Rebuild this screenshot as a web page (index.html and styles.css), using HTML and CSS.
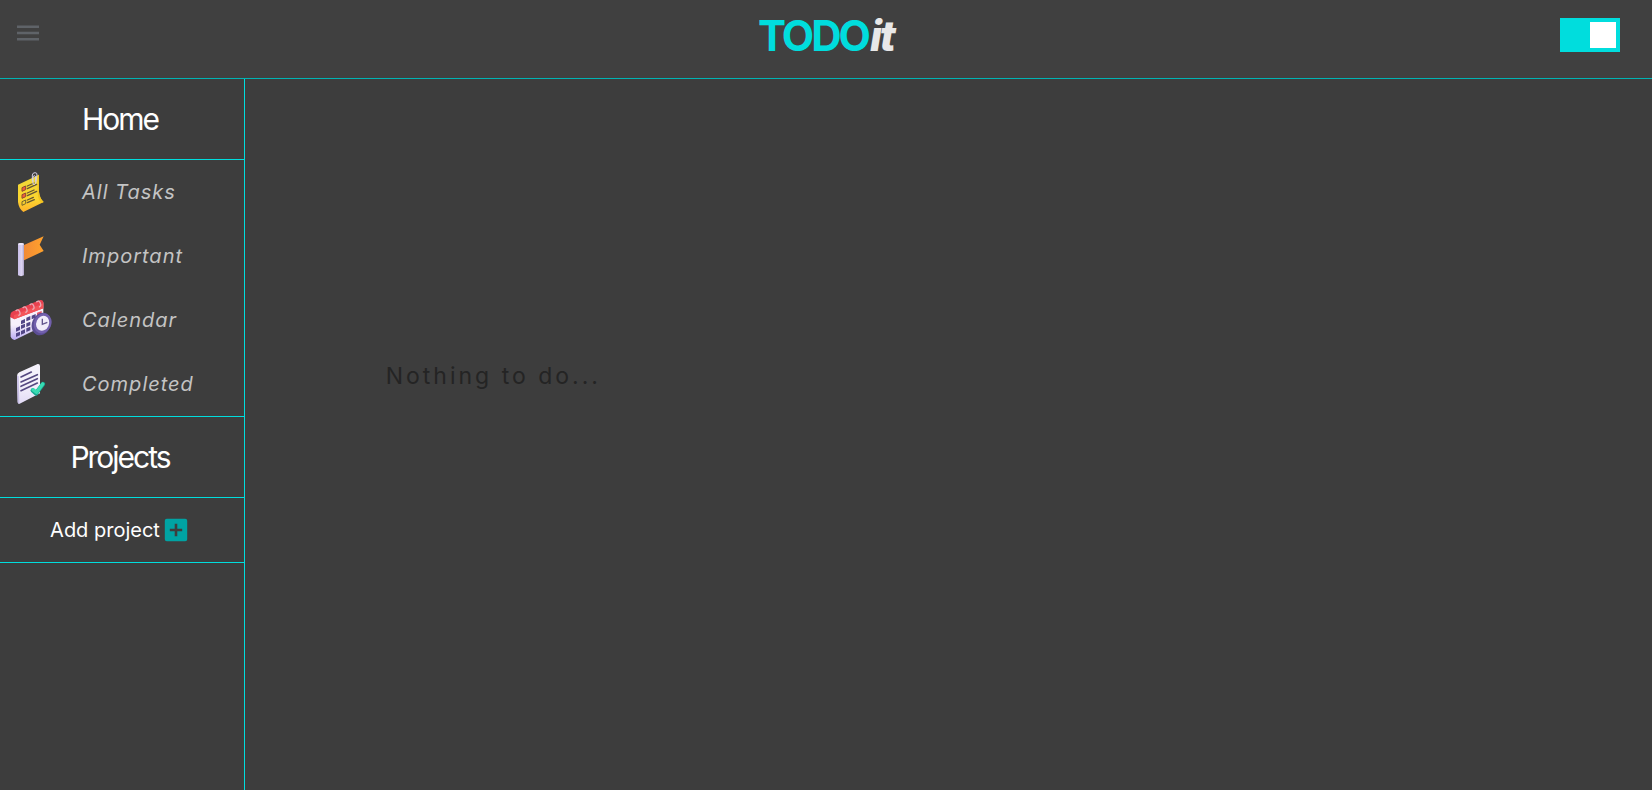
FILE: index.html
```html
<!DOCTYPE html>
<html lang="en">
<head>
<meta charset="utf-8">
<meta name="viewport" content="width=device-width, initial-scale=1">
<title>TODOit</title>
<link rel="stylesheet" href="styles.css">
</head>
<body>
<header class="header">
  <button class="menu-button" type="button" aria-label="Toggle menu">
    <svg class="menu-icon" viewBox="0 0 24 24" aria-hidden="true"><path d="M1 4.4h22v2.5H1zM1 10.7h22v2.5H1zM1 17h22v2.5H1z"/></svg>
  </button>
  <h1 class="logo">TODO<em class="logo-it">it</em></h1>
  <input class="switch" type="checkbox" role="switch" aria-label="Dark theme" checked>
</header>
<div class="layout">
  <aside class="sidebar">
    <h2 class="section-title">Home</h2>
    <nav class="nav">
      <button class="nav-item" type="button">
        <svg class="nav-icon" viewBox="30 33 126 126" aria-hidden="true">
          <defs><linearGradient id="note" x1="0" y1="0" x2="0" y2="1"><stop offset="0" stop-color="#eed83a"/><stop offset=".65" stop-color="#fbd62f"/><stop offset="1" stop-color="#ffb22c"/></linearGradient></defs>
          <path d="M54 74L117 44V96Q119 115 131 126L70 156Q56 145 54 126Z" fill="url(#note)"/>
          <path d="M117 44V96Q119 115 131 126L124 129Q113 116 113 98V46Z" fill="#f2c420"/>
          <path d="M66 83l11-5v11l-11 5zM66 104l11-5v11l-11 5z" fill="#f0603a" stroke="#8b4a35" stroke-width="3"/>
          <path d="M66 125l11-5v11l-11 5z" fill="#f6cf30" stroke="#75652f" stroke-width="3"/>
          <path d="M82 78l20-9M82 86l28-13M82 99l20-9M82 107l28-13M82 120l18-8M82 128l21-9" stroke="#655635" stroke-width="4" stroke-linecap="round"/>
          <path d="M97 65V45Q98 38 105 38Q112 38 111 45L107 70Q104 76 99 72V50Q104 43 107 51V65" fill="none" stroke="#d5cfe3" stroke-width="3"/>
        </svg>
        All Tasks
      </button>
      <button class="nav-item" type="button">
        <svg class="nav-icon" viewBox="30 30 126 126" aria-hidden="true">
          <defs><linearGradient id="flag"><stop offset="0" stop-color="#f28a36"/><stop offset="1" stop-color="#ffa22c"/></linearGradient><linearGradient id="pole"><stop stop-color="#c8bee8"/><stop offset=".65" stop-color="#ddd5f2"/><stop offset="1" stop-color="#aaa0c5"/></linearGradient></defs>
          <path d="M72 60L131 34L119 59L131 78L72 106Z" fill="url(#flag)"/>
          <path d="M54 57Q62 51 72 57V151Q63 156 54 151Z" fill="url(#pole)"/>
          <ellipse cx="63" cy="57" rx="9" ry="3" fill="#eee8fb"/>
        </svg>
        Important
      </button>
      <button class="nav-item" type="button">
        <svg class="nav-icon" viewBox="30 27 126 126" aria-hidden="true">
          <defs><linearGradient id="sheet" x1="0" y1="0" x2="0" y2="1"><stop offset=".6" stop-color="#f7f1fb"/><stop offset="1" stop-color="#baaaf2"/></linearGradient></defs>
          <path d="M31 82L130 37V108L44 150Q34 149 32 139Z" fill="url(#sheet)"/>
          <path d="M31 76Q31 67 39 64L120 30Q130 28 130 38V55L43 88L31 82Z" fill="#e94150"/>
          <path d="M42 88V76L130 40V55Z" fill="#f45459"/>
          <path d="M48 114l12-5v11l-12 5zM63 106l12-5v11l-12 5zM63 92l12-5v11l-12 5zM79 83l12-5v11l-12 5zM79 100l12-5v11l-12 5zM95 77l12-5v11l-12 5zM48 130l12-5v11l-12 5zM63 123l12-5v11l-12 5zM79 115l12-5v11l-12 5z" fill="#524687"/>
          <path d="M111 68l14-5v10l-14 5z" fill="#e65666"/>
          <path d="M47 63q8-8 12 2t-4 12M68 54q8-8 12 2t-4 12M89 45q8-8 12 2t-4 12M109 37q8-8 12 2t-4 12" fill="none" stroke="#eaa9b5" stroke-width="4"/>
          <ellipse cx="124" cy="102" rx="28" ry="35" transform="rotate(24 124 102)" fill="#5b4d93"/>
          <ellipse cx="128" cy="100" rx="26" ry="31" transform="rotate(24 128 100)" fill="#7260ad"/>
          <ellipse cx="128" cy="100" rx="19" ry="23" transform="rotate(24 128 100)" fill="#f1edfa"/>
          <path d="M127 86V103L142 97" fill="none" stroke="#62568d" stroke-width="4"/>
        </svg>
        Calendar
      </button>
      <button class="nav-item" type="button">
        <svg class="nav-icon" viewBox="30 24 126 126" aria-hidden="true">
          <defs><linearGradient id="page" x1="0" y1="0" x2="0" y2="1"><stop offset=".5" stop-color="#f4f1fb"/><stop offset="1" stop-color="#e2dbf6"/></linearGradient></defs>
          <path d="M51 63Q51 55 58 52L113 27Q120 26 120 34V115L59 146Q53 147 53 141Z" fill="url(#page)"/>
          <path d="M51 61L56 64L58 146Q53 147 53 141Z" fill="#c8bfe7"/>
          <path d="M63 66L94 51M63 81L112 59M63 94L112 71M63 107L112 84" stroke="#554981" stroke-width="5" stroke-linecap="round"/>
          <path d="M98 106L108 115L129 87" fill="none" stroke="#16a893" stroke-width="13" stroke-linejoin="round" stroke-linecap="round"/>
          <path d="M99 104L110 112L128 87" fill="none" stroke="#38dbb2" stroke-width="10" stroke-linejoin="round" stroke-linecap="round"/>
        </svg>
        Completed
      </button>
    </nav>
    <h2 class="section-title">Projects</h2>
    <button class="add-project" type="button">
      Add project
      <svg class="add-icon" viewBox="0 0 24 24" aria-hidden="true"><path fill-rule="evenodd" d="M2.8 .8H21.2Q23.2 .8 23.2 2.8V21.2Q23.2 23.2 21.2 23.2H2.8Q.8 23.2 .8 21.2V2.8Q.8 .8 2.8 .8ZM10.7 5.8V10.7H5.8V13.3H10.7V18.2H13.3V13.3H18.2V10.7H13.3V5.8Z"/></svg>
    </button>
  </aside>
  <main class="content">
    <p class="empty">Nothing to do...</p>
  </main>
</div>
</body>
</html>
```
FILE: styles.css
```css
* {
  box-sizing: border-box;
}

body {
  display: flex;
  flex-direction: column;
  min-height: 100vh;
  margin: 0;
  background: #3d3d3d;
  color: #fff;
  font-family: Inter, "Liberation Sans", sans-serif;
}

button {
  padding: 0;
  border: 0;
  background: none;
  color: inherit;
  font: inherit;
  cursor: pointer;
}

.header {
  display: grid;
  grid-template-columns: 1fr auto 1fr;
  align-items: start;
  padding: 12px 16px 18px;
  border-bottom: 1px solid #00b3b3;
  background: #404040;
}

.menu-button {
  justify-self: start;
  margin-top: 9px;
  height: 24px;
}

.menu-icon {
  display: block;
  width: 24px;
  height: 24px;
  fill: #5f6368;
}

.logo {
  margin: 0;
  color: #00dddd;
  font-size: 42px;
  font-weight: 700;
  line-height: 48px;
  letter-spacing: -3px;
}

.logo-it {
  padding-left: 2px;
  color: #e8e8e8;
  font-weight: 800;
  letter-spacing: -2px;
}

.switch {
  display: flex;
  justify-self: end;
  width: 60px;
  height: 34px;
  margin: 6px 16px 0 0;
  padding: 4px;
  appearance: none;
  background: #888;
  cursor: pointer;
}

.switch::before {
  width: 26px;
  height: 26px;
  background: #fff;
  content: "";
}

.switch:checked {
  justify-content: flex-end;
  background: #00dddd;
}

.layout {
  display: flex;
  flex: 1;
}

.sidebar {
  flex: 0 0 245px;
  border-right: 1px solid #00dddd;
}

.section-title {
  margin: 0;
  padding: 20px 4px 20px 0;
  border-bottom: 1px solid #00dddd;
  font-size: 30px;
  font-weight: 400;
  line-height: 40px;
  letter-spacing: -2px;
  text-align: center;
}

.nav {
  border-bottom: 1px solid #00dddd;
}

.nav-item {
  display: flex;
  align-items: center;
  gap: 30px;
  width: 100%;
  padding: 11px 10px;
  color: #c4c4c4;
  font-size: 20px;
  font-style: italic;
  letter-spacing: 1px;
}

.nav-icon {
  width: 42px;
  height: 42px;
}

.add-project {
  display: flex;
  align-items: center;
  justify-content: center;
  gap: 4px;
  width: 100%;
  padding: 20px 6px 20px 0;
  border-bottom: 1px solid #00dddd;
  font-size: 20px;
  line-height: 24px;
}

.add-icon {
  width: 24px;
  height: 24px;
  fill: #00a3a3;
}

.content {
  flex: 1;
  padding: calc((100vw - 245px) * 0.2) calc((100vw - 245px) * 0.1) 0;
}

.empty {
  margin: 0;
  color: #242424;
  font-size: 23px;
  line-height: 32px;
  letter-spacing: 3px;
}
```
